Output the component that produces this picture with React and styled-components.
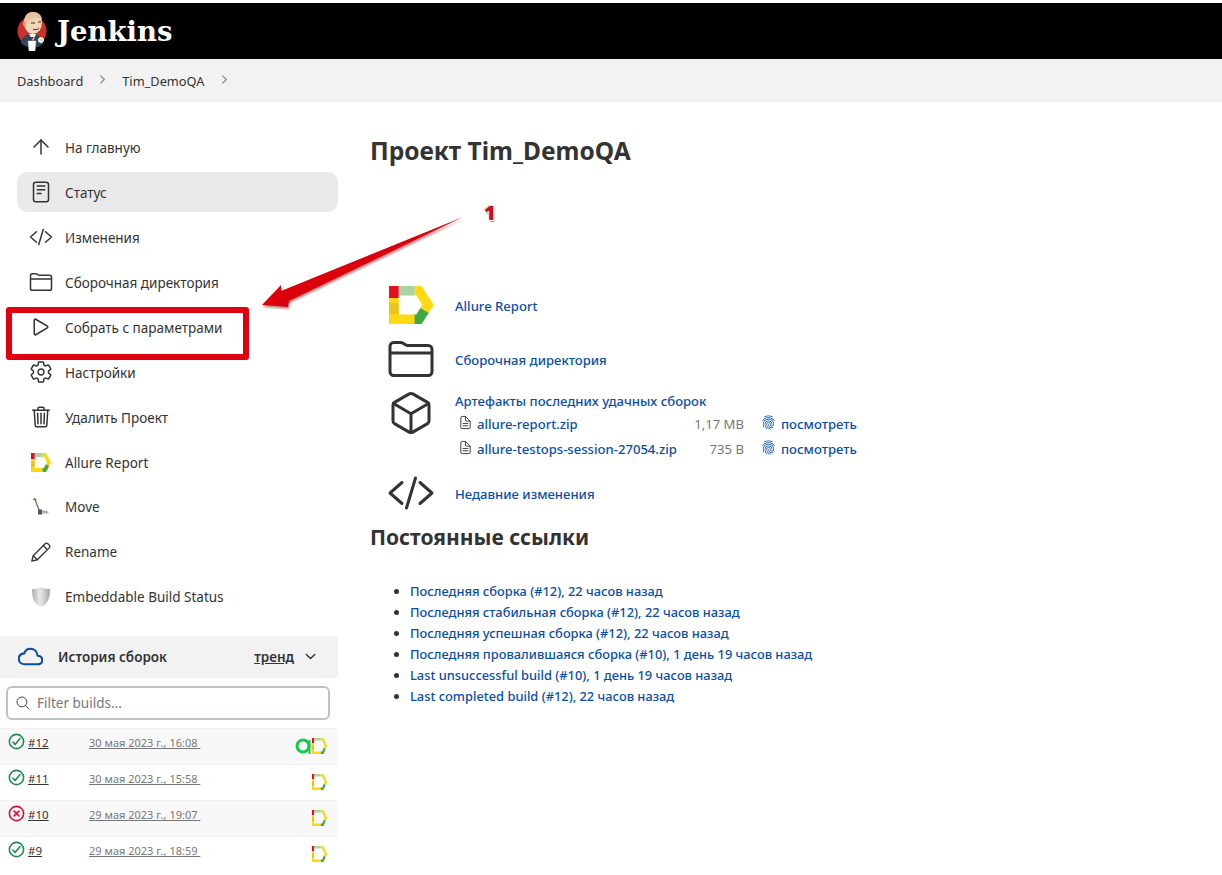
import styled, { createGlobalStyle } from "styled-components"
import { ArrowUp } from "lucide-react"
import {
	IoReaderOutline,
	IoCodeSlashOutline,
	IoFolderOutline,
	IoPlayOutline,
	IoSettingsOutline,
	IoTrashOutline,
	IoCubeOutline,
	IoCloudOutline,
	IoChevronDownOutline,
	IoChevronForwardOutline,
	IoSearchOutline,
	IoFingerPrintOutline,
	IoCheckmarkCircleOutline,
	IoCloseCircleOutline,
	IoDocumentTextOutline,
} from "react-icons/io5"

const GlobalStyle = createGlobalStyle`
	html, body {
		margin: 0;
		height: 100%;
		overflow: hidden;
		background: #fff;
	}
	body {
		font-family: "Noto Sans", "Open Sans", sans-serif;
		font-size: 13px;
		color: #333;
	}
`

const AllureLogo = ({ width, height, stroke = 9.5 }) => {
	const s = stroke / 2
	const bottom = 38 - s
	const right = 43 - s
	return (
		<svg width={width} height={height} viewBox="0 0 43 38" fill="none" strokeWidth={stroke} preserveAspectRatio="none">
			<path d={`M25 ${s}H${right - 9}L${right} 19L${right - 4} 25`} stroke="#fcd912" />
			<path d={`M${right - 3.5} 24.5L${right - 9} ${bottom}H24`} stroke="#3fa845" />
			<path d={`M${s} ${bottom}H25`} stroke="#fcd912" />
			<path d={`M${s} 12V38`} stroke="#fcd912" />
			<path d={`M${s} 17V28`} stroke="#e6c61e" />
			<path d={`M${stroke} ${s}H25`} stroke="#a9d4a2" />
			<path d={`M${s} 0V12`} stroke="#e2101c" />
		</svg>
	)
}

const TestOpsLogo = () => (
	<svg width="17" height="16" viewBox="0 0 17 16" fill="none">
		<circle cx="8" cy="8" r="6" stroke="#12c94c" strokeWidth="3" />
		<path d="M14.5 2V16" stroke="#12c94c" strokeWidth="2" />
	</svg>
)

const ButlerLogo = () => (
	<svg width="30" height="40" viewBox="0 0 30 40">
		<circle cx="15" cy="20" r="14.5" fill="#c9302c" />
		<path d="M4 32C5 25 10 23 15 23C21 23 25 26 26 33C21 38 9 38 4 32Z" fill="#2f4858" />
		<path d="M12 23L16 30L19 23Z" fill="#fff" />
		<path d="M13 26L17 26L15 29Z" fill="#a31f1f" />
		<ellipse cx="16" cy="12" rx="9" ry="11" fill="#f0d6b7" />
		<path d="M7 12C7 4 11 1 16 1C21 1 25 4 25 9C21 5 12 5 9 15Z" fill="#e7c3a0" />
		<path d="M7 10C5 12 6 16 9 16L9 11Z" fill="#d9a884" />
		<path d="M14 12H18M21 11H24M16 18C18 19 20 19 22 17" stroke="#49291c" strokeWidth="1" fill="none" />
		<path d="M11 30H19L18 40H12Z" fill="#fff" stroke="#ccc" strokeWidth="0.5" />
		<circle cx="24" cy="29" r="2.5" fill="#f0d6b7" stroke="#fff" />
	</svg>
)

const MoveIcon = () => (
	<svg width="18" height="20" viewBox="0 0 18 20" fill="none">
		<path d="M2.5 1L7.5 14.5" stroke="#777" strokeWidth="1.4" />
		<path d="M1 2.5H4.5" stroke="#c55" strokeWidth="1.4" />
		<path d="M6 13.5H15L17 16.5H6Z" fill="#b0b0b0" />
		<rect x="6" y="12.5" width="4" height="5" fill="#555" />
	</svg>
)

const PencilIcon = () => (
	<svg width="22" height="22" viewBox="0 0 24 24" fill="none" stroke="#333" strokeWidth="1.5" strokeLinejoin="round">
		<path d="M2 22L3.5 16L16.5 3A2.1 2.1 0 0 1 19.5 3L21 4.5A2.1 2.1 0 0 1 21 7.5L8 20.5Z" />
		<path d="M14.5 5L19 9.5M3.5 16L8 20.5" />
	</svg>
)

const ShieldIcon = () => (
	<svg width="20" height="22" viewBox="0 0 20 22">
		<defs>
			<linearGradient id="shield" x1="0" y1="0" x2="1" y2="0">
				<stop offset="0" stopColor="#adadad" />
				<stop offset="0.45" stopColor="#ececec" />
				<stop offset="1" stopColor="#a2a2a2" />
			</linearGradient>
		</defs>
		<path d="M10 1C7 2.5 4 3 1 3C1 12 3 18 10 21C17 18 19 12 19 3C16 3 13 2.5 10 1Z" fill="url(#shield)" />
		<path d="M10 3V19" stroke="#d0d0d0" strokeWidth="0.8" strokeDasharray="1.5 1.5" />
	</svg>
)

const Page = styled.div`
	position: relative;
	height: 875px;
	overflow: hidden;
	padding-top: 3px;
	box-sizing: border-box;
`

const Header = styled.header`
	display: flex;
	align-items: center;
	gap: 10px;
	height: 56px;
	padding-left: 17px;
	background: #000;
`

const Brand = styled.span`
	font-family: "DejaVu Serif", "Liberation Serif", serif;
	font-weight: 700;
	font-size: 27.5px;
	color: #fff;
`

const Breadcrumbs = styled.nav`
	display: flex;
	align-items: center;
	height: 43px;
	padding-left: 17px;
	background: #f2f2f2;
	color: #333;
	font-size: 12.8px;
`

const Crumb = styled.span`
	display: flex;
	align-items: center;

	svg {
		margin: 0 13px 2px 13px;
		color: #888;
	}
`

const Main = styled.div`
	display: flex;
`

const Sidebar = styled.aside`
	flex: 0 0 338px;
	padding-top: 25px;
`

const Nav = styled.div`
	display: flex;
	flex-direction: column;
	gap: 5px;
	padding-left: 17px;
`

const NavItem = styled.div`
	display: flex;
	align-items: center;
	gap: 12px;
	height: 39.95px;
	box-sizing: border-box;
	padding: 2px 0 0 12px;
	border-radius: 10px;
	background: ${(p) => (p.$active ? "#e9e9e9" : "transparent")};
	font-size: 13.5px;
	color: #333;
`

const NavIcon = styled.span`
	display: flex;
	align-items: center;
	justify-content: center;
	width: 24px;
	height: 24px;
	font-size: 24px;
	margin-top: -1px;
`

const HistoryHeader = styled.div`
	display: flex;
	align-items: center;
	height: 42px;
	margin-top: 19.5px;
	padding: 0 20px 0 18px;
	background: #f2f2f2;
	color: #333;
	font-weight: 600;
	font-size: 13.5px;
`

const CloudIcon = styled(IoCloudOutline)`
	font-size: 25px;
	color: #0b4ea8;
	margin-right: 15px;

	path {
		stroke-width: 42 !important;
	}
`

const Trend = styled.span`
	margin-left: auto;
	margin-right: 9px;
	text-decoration: underline;
`

const FilterBox = styled.div`
	display: flex;
	align-items: center;
	gap: 6px;
	height: 34px;
	margin: 8px 8px 8px 6px;
	padding-left: 7px;
	box-sizing: border-box;
	border: 2px solid #b9c3c7;
	border-radius: 6px;
	color: #777;
	font-size: 13.5px;
`

const BuildRow = styled.div`
	display: flex;
	justify-content: space-between;
	align-items: center;
	height: 36px;
	box-sizing: border-box;
	padding: 0 11px 0 7px;
	background: ${(p) => (p.$shaded ? "#f8f8f8" : "#fff")};
	border-top: 1px solid #f0f0f0;
`

const BuildInfo = styled.div`
	display: flex;
	align-items: center;
	align-self: flex-start;
	padding-top: 6px;
`

const StatusIcon = styled.span`
	display: flex;
	width: 21px;
	font-size: 19px;
	margin-top: -3px;
	color: ${(p) => (p.$failed ? "#d40f34" : "#1e8a50")};

	path, circle {
		stroke-width: 42 !important;
	}
`

const BuildNumber = styled.span`
	width: 61px;
	font-size: 11.5px;
	text-decoration: underline;
	color: #333;
`

const BuildDate = styled.span`
	font-size: 11px;
	text-decoration: underline;
	color: #777;
`

const Badges = styled.div`
	display: flex;
	align-items: center;
`

const Content = styled.main`
	flex: 1;
	padding: 33px 0 0 32px;
`

const Title = styled.h1`
	margin: 0;
	font-size: 24.5px;
	line-height: 32px;
	font-weight: 700;
	color: #333;
`

const Tasks = styled.div`
	margin-top: 111px;
	display: flex;
	flex-direction: column;
`

const TaskRow = styled.div`
	display: flex;
	align-items: ${(p) => (p.$top ? "flex-start" : "center")};
	gap: 20px;
	height: ${(p) => p.$height}px;
	box-sizing: border-box;
	padding: ${(p) => (p.$top ? "3px" : "0")} 0 0 17px;
`

const TaskIcon = styled.span`
	display: flex;
	align-items: center;
	justify-content: center;
	width: 48px;
	height: 48px;
	font-size: 48px;
	color: #333;
	flex: none;
`

const Link = styled.a`
	color: #0b4ea8;
	font-size: 13.1px;
	font-weight: 500;
`

const TaskLink = styled(Link)`
	padding-top: 2px;
`

const Artifacts = styled.div`
	display: flex;
	flex-direction: column;
	padding-top: 3px;
`

const FileGrid = styled.div`
	display: grid;
	grid-template-columns: 219px 67px 32px auto;
	grid-auto-rows: 25px;
	align-items: center;
	margin-top: 1px;
	margin-left: 3px;
`

const FileName = styled.span`
	display: flex;
	align-items: center;
	gap: 4px;
	color: #0b4ea8;
	font-size: 13.1px;
	font-weight: 500;
	white-space: nowrap;

	svg {
		font-size: 15px;
		color: #333;
		margin-top: -3px;
		flex: none;
	}
`

const FileSize = styled.span`
	text-align: right;
	color: #777;
	font-size: 13.1px;
	white-space: nowrap;
`

const Fingerprint = styled(IoFingerPrintOutline)`
	font-size: 15px;
	color: #0b4ea8;
	margin-top: -3px;
	justify-self: end;
`

const ViewLink = styled(Link)`
	margin-left: 5px;
`

const SectionTitle = styled.h2`
	margin: 3px 0 0 0;
	font-size: 21px;
	line-height: 28px;
	font-weight: 700;
	color: #333;
`

const Permalinks = styled.ul`
	margin: 30px 0 0 0;
	padding-left: 40px;
	color: #333;

	li {
		height: 21px;
		line-height: 21px;
	}

	a {
		font-size: 12.85px;
	}
`

const RedBox = styled.div`
	position: absolute;
	left: 6px;
	top: 307px;
	width: 243px;
	height: 53px;
	box-sizing: border-box;
	border: 6px solid #e0000f;
	border-radius: 3px;
`

const Arrow = styled.svg`
	position: absolute;
	left: 255px;
	top: 210px;
	filter: drop-shadow(1px 2px 1px rgba(80, 0, 0, 0.45));
`

const ArrowLabel = styled.span`
	position: absolute;
	left: 484px;
	top: 199px;
	font-family: "Open Sans", sans-serif;
	font-weight: 800;
	font-size: 20px;
	color: #c8101a;
	text-shadow: 1px 1px 0 #fff, -1px -1px 0 #ddd, 1px 2px 1px #888;
`

const navItems = [
	{ icon: <ArrowUp size={24} strokeWidth={1.5} />, label: "На главную" },
	{ icon: <IoReaderOutline />, label: "Статус", active: true },
	{ icon: <IoCodeSlashOutline />, label: "Изменения" },
	{ icon: <IoFolderOutline />, label: "Сборочная директория" },
	{ icon: <IoPlayOutline />, label: "Собрать с параметрами" },
	{ icon: <IoSettingsOutline />, label: "Настройки" },
	{ icon: <IoTrashOutline />, label: "Удалить Проект" },
	{ icon: <AllureLogo width={20} height={19} stroke={8} />, label: "Allure Report" },
	{ icon: <MoveIcon />, label: "Move" },
	{ icon: <PencilIcon />, label: "Rename" },
	{ icon: <ShieldIcon />, label: "Embeddable Build Status" },
]

const builds = [
	{ id: "#12", date: "30 мая 2023 г., 16:08", testops: true, shaded: true },
	{ id: "#11", date: "30 мая 2023 г., 15:58" },
	{ id: "#10", date: "29 мая 2023 г., 19:07", failed: true, shaded: true },
	{ id: "#9", date: "29 мая 2023 г., 18:59" },
]

const files = [
	{ name: "allure-report.zip", size: "1,17 MB" },
	{ name: "allure-testops-session-27054.zip", size: "735 B" },
]

const permalinks = [
	"Последняя сборка (#12), 22 часов назад",
	"Последняя стабильная сборка (#12), 22 часов назад",
	"Последняя успешная сборка (#12), 22 часов назад",
	"Последняя провалившаяся сборка (#10), 1 день 19 часов назад",
	"Last unsuccessful build (#10), 1 день 19 часов назад",
	"Last completed build (#12), 22 часов назад",
]

export default function App() {
	return (
		<Page>
			<GlobalStyle />
			<Header>
				<ButlerLogo />
				<Brand>Jenkins</Brand>
			</Header>
			<Breadcrumbs>
				<Crumb>
					Dashboard
					<IoChevronForwardOutline size={13} />
				</Crumb>
				<Crumb>
					Tim_DemoQA
					<IoChevronForwardOutline size={13} />
				</Crumb>
			</Breadcrumbs>
			<Main>
				<Sidebar>
					<Nav>
						{navItems.map((item) => (
							<NavItem key={item.label} $active={item.active}>
								<NavIcon>{item.icon}</NavIcon>
								{item.label}
							</NavItem>
						))}
					</Nav>
					<HistoryHeader>
						<CloudIcon />
						История сборок
						<Trend>тренд</Trend>
						<IoChevronDownOutline size={15} />
					</HistoryHeader>
					<FilterBox>
						<IoSearchOutline size={16} color="#444" />
						Filter builds...
					</FilterBox>
					{builds.map((build) => (
						<BuildRow key={build.id} $shaded={build.shaded}>
							<BuildInfo>
								<StatusIcon $failed={build.failed}>
									{build.failed ? <IoCloseCircleOutline /> : <IoCheckmarkCircleOutline />}
								</StatusIcon>
								<BuildNumber>{build.id}</BuildNumber>
								<BuildDate>{build.date}{"\u00a0"}</BuildDate>
							</BuildInfo>
							<Badges>
								{build.testops && <TestOpsLogo />}
								<AllureLogo width={15} height={16} stroke={6} />
							</Badges>
						</BuildRow>
					))}
				</Sidebar>
				<Content>
					<Title>Проект Tim_DemoQA</Title>
					<Tasks>
						<TaskRow $height={54}>
							<TaskIcon>
								<AllureLogo width={44} height={38} />
							</TaskIcon>
							<TaskLink>Allure Report</TaskLink>
						</TaskRow>
						<TaskRow $height={54}>
							<TaskIcon>
								<IoFolderOutline />
							</TaskIcon>
							<TaskLink>Сборочная директория</TaskLink>
						</TaskRow>
						<TaskRow $height={80} $top>
							<TaskIcon>
								<IoCubeOutline />
							</TaskIcon>
							<Artifacts>
								<Link>Артефакты последних удачных сборок</Link>
								<FileGrid>
									{files.map((file) => [
										<FileName key={file.name}>
											<IoDocumentTextOutline />
											{file.name}
										</FileName>,
										<FileSize key={file.size}>{file.size}</FileSize>,
										<Fingerprint key={file.name + "-print"} />,
										<ViewLink key={file.name + "-view"}>посмотреть</ViewLink>,
									])}
								</FileGrid>
							</Artifacts>
						</TaskRow>
						<TaskRow $height={54}>
							<TaskIcon>
								<IoCodeSlashOutline />
							</TaskIcon>
							<TaskLink>Недавние изменения</TaskLink>
						</TaskRow>
					</Tasks>
					<SectionTitle>Постоянные ссылки</SectionTitle>
					<Permalinks>
						{permalinks.map((text) => (
							<li key={text}>
								<Link>{text}</Link>
							</li>
						))}
					</Permalinks>
				</Content>
			</Main>
			<RedBox />
			<Arrow width="215" height="105" viewBox="255 210 215 105">
				<polygon points="262,305 281,285 281,291 463,217 289,301 288,307" fill="#dc000d" />
			</Arrow>
			<ArrowLabel>1</ArrowLabel>
		</Page>
	)
}
